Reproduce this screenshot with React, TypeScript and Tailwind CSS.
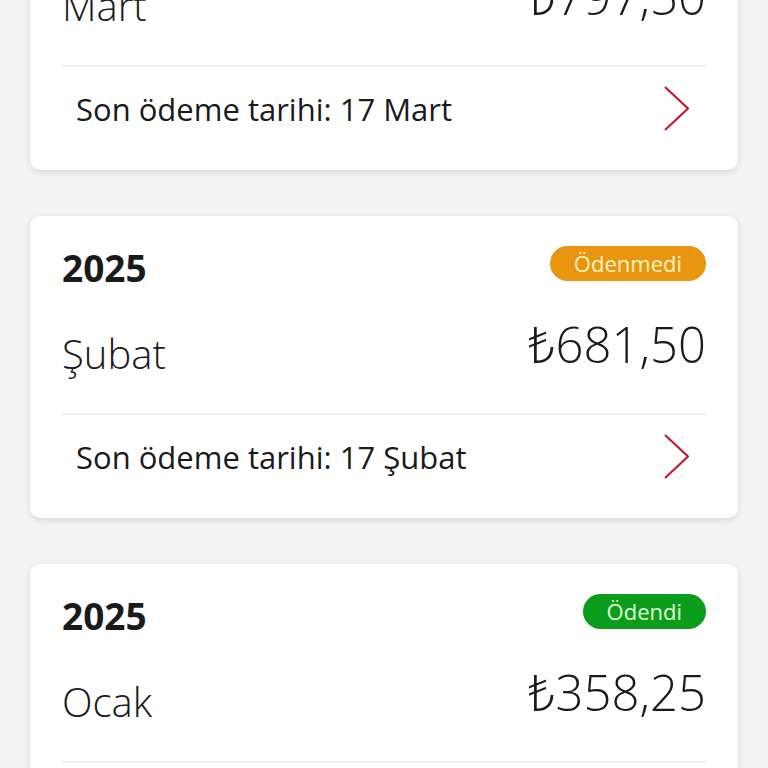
import React from "react";

type Bill = {
  year: string;
  month: string;
  amount: string;
  due: string;
  paid: boolean;
};

const bills: Bill[] = [
  { year: "2025", month: "Mart", amount: "₺797,50", due: "17 Mart", paid: false },
  { year: "2025", month: "Şubat", amount: "₺681,50", due: "17 Şubat", paid: false },
  { year: "2025", month: "Ocak", amount: "₺358,25", due: "17 Ocak", paid: true },
];

const Chevron = () => (
  <svg width="26" height="48" viewBox="0 0 26 48" fill="none">
    <path d="M2 2 L25 23.5 L2 45" stroke="#c8102e" strokeWidth="2" />
  </svg>
);

const BillCard: React.FC<{ bill: Bill }> = ({ bill }) => (
  <div className="bg-white rounded-[10px] shadow-[0_2px_6px_rgba(0,0,0,0.12)] px-[32px] pt-[30px] pb-[19px]">
    <div className="flex items-start justify-between">
      <span className="text-[37px] leading-[44px] font-bold text-[#1a1a1a]">{bill.year}</span>
      {bill.paid ? (
        <span className="h-[35px] px-[24px] rounded-full bg-[#0c9c1c] text-[#e0ffd8] text-[22px] leading-[35px]">
          Ödendi
        </span>
      ) : (
        <span className="h-[35px] px-[24px] rounded-full bg-[#e8960f] text-[#fff2c4] text-[22px] leading-[35px]">
          Ödenmedi
        </span>
      )}
    </div>
    <div className="flex items-start justify-between h-[54px] mt-[30px] mb-[39px]">
      <span className="mt-[14px] text-[40px] leading-none font-light text-[#1a1a1a]">{bill.month}</span>
      <span className="text-[49px] leading-none font-light text-[#1a1a1a]">{bill.amount}</span>
    </div>
    <div className="border-t-[2px] border-[#efefef]" />
    <div className="flex items-center justify-between h-[84px] pl-[14px] pr-[17px]">
      <span className="text-[31px] leading-none text-[#1a1a1a]">Son ödeme tarihi: {bill.due}</span>
      <Chevron />
    </div>
  </div>
);

export default function App() {
  return (
    <div
      className="h-screen overflow-hidden bg-[#f3f3f3]"
      style={{ fontFamily: '"Open Sans", "Noto Sans", sans-serif' }}
    >
      <div className="-mt-[132px] flex flex-col gap-[46px] px-[30px]">
        {bills.map((b) => (
          <BillCard key={b.month} bill={b} />
        ))}
      </div>
    </div>
  );
}
